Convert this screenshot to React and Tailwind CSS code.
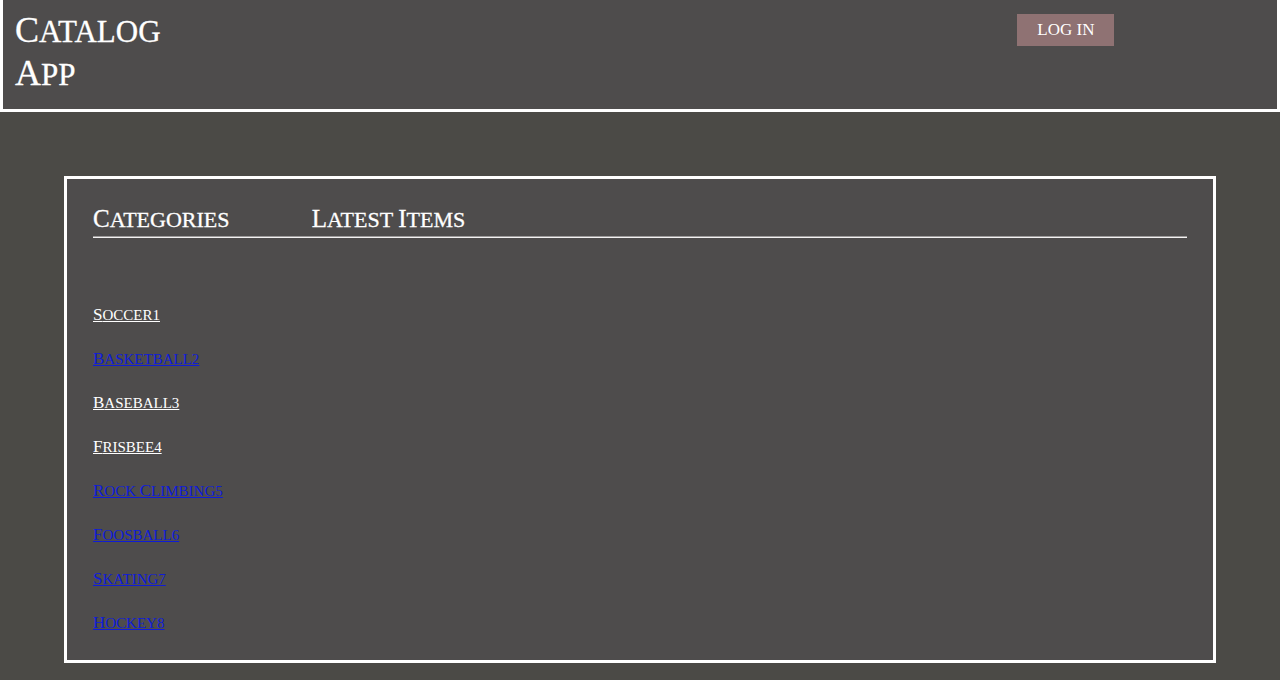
const categories = [
  { id: 1, name: 'Soccer', visited: true },
  { id: 2, name: 'Basketball', visited: false },
  { id: 3, name: 'Baseball', visited: true },
  { id: 4, name: 'Frisbee', visited: true },
  { id: 5, name: 'Rock Climbing', visited: false },
  { id: 6, name: 'Foosball', visited: false },
  { id: 7, name: 'Skating', visited: false },
  { id: 8, name: 'Hockey', visited: false },
];

// Small capitals with a gentler size step than the browser's synthesized ones.
function Caps({ text, initial }) {
  return text.split(' ').map((word, i) => (
    <span key={i}>
      {i > 0 && ' '}
      <span className={initial}>{word[0]}</span>
      {word.slice(1)}
    </span>
  ));
}

function ColumnHeading({ children }) {
  return (
    <div>
      <h2 className="pb-px text-[22px] leading-[30px] uppercase [-webkit-text-stroke:0.3px_white]">
        <Caps text={children} initial="text-[25px] leading-none" />
      </h2>
      <hr className="h-0 border-t border-b border-t-[#9c9a9a] border-b-[#f4f2f2]" />
    </div>
  );
}

export default function App() {
  return (
    <div className="min-h-screen bg-[#4b4a46] pb-4 font-['Liberation_Serif',serif] text-white">
      <header className="flex items-start justify-between border-x-3 border-b-3 border-white bg-[#4e4c4c] pt-2.5 pr-[12.7%] pb-[13px] pl-3">
        <h1 className="w-1/6 text-[31px] leading-[43px] uppercase [-webkit-text-stroke:0.3px_white]">
          <Caps text="Catalog App" initial="text-[36px] leading-none" />
        </h1>
        <button type="button" className="mt-1 h-8 bg-[#8f7273] px-5 text-[17px] leading-8">
          LOG IN
        </button>
      </header>

      <main className="mx-[5%] mt-16 border-3 border-white bg-[#4e4c4c] px-[26px] pt-[26px] pb-[25px]">
        <div className="grid grid-cols-[1fr_4fr]">
          <ColumnHeading>Categories</ColumnHeading>
          <ColumnHeading>Latest Items</ColumnHeading>
        </div>
        <ul className="mt-[65px] flex flex-col gap-5">
          {categories.map(({ id, name, visited }) => (
            <li key={id} className="h-6 text-[15px] leading-6 uppercase">
              <a
                href={`#category-${id}`}
                className={`underline decoration-1 underline-offset-1 ${visited ? 'text-white' : 'text-[#0f1cd8]'}`}
              >
                <Caps text={name + id} initial="text-[17px] leading-none" />
              </a>
            </li>
          ))}
        </ul>
      </main>
    </div>
  );
}
